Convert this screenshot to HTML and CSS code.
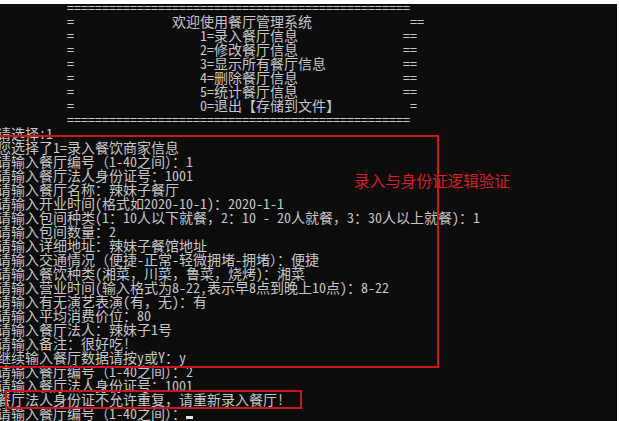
FILE: index.html
```html
<!DOCTYPE html>
<html lang="zh-CN">
<head>
<meta charset="utf-8">
<title>餐厅管理系统</title>
<link rel="stylesheet" href="styles.css">
</head>
<body>
<div class="term">
<pre class="lines">          =================================================
          =              欢迎使用餐厅管理系统              ==
          =                  1=录入餐厅信息               ==
          =                  2=修改餐厅信息               ==
          =                  3=显示所有餐厅信息           ==
          =                  4=删除餐厅信息               ==
          =                  5=统计餐厅信息               ==
          =                  0=退出【存储到文件】          =
          =================================================
请选择:1
您选择了1=录入餐饮商家信息
请输入餐厅编号（1-40之间）：1
请输入餐厅法人身份证号：1001
请输入餐厅名称：辣妹子餐厅
请输入开业时间(格式如2020-10-1)：2020-1-1
请输入包间种类(1：10人以下就餐，2：10 - 20人就餐，3：30人以上就餐)：1
请输入包间数量：2
请输入详细地址：辣妹子餐馆地址
请输入交通情况（便捷-正常-轻微拥堵-拥堵）：便捷
请输入餐饮种类(湘菜，川菜，鲁菜，烧烤)：湘菜
请输入营业时间(输入格式为8-22,表示早8点到晚上10点)：8-22
请输入有无演艺表演(有，无)：有
请输入平均消费价位：80
请输入餐厅法人：辣妹子1号
请输入备注：很好吃!
继续输入餐厅数据请按y或Y：y
请输入餐厅编号（1-40之间）：2
请输入餐厅法人身份证号：1001
餐厅法人身份证不允许重复，请重新录入餐厅!
请输入餐厅编号（1-40之间）：<span class="cursor"></span></pre>
<div class="mark mark-main"></div>
<div class="mark mark-dup"></div>
<div class="note">录入与身份证逻辑验证</div>
</div>
</body>
</html>
```
FILE: styles.css
```css
html, body {
  margin: 0;
  padding: 0;
  background: #ffffff;
}
body {
  width: 619px;
  height: 421px;
  overflow: hidden;
}
.term {
  position: relative;
  margin: 4px 2px 0 0;
  height: 417px;
  background: #0c0c0c;
  overflow: hidden;
}
.lines {
  margin: -4px 0 0 -3px;
  padding: 0;
  font-family: "Noto Sans Mono CJK SC", "Noto Sans CJK SC", "Liberation Mono", monospace;
  font-size: 14px;
  line-height: 14px;
  color: #c6c6c6;
  white-space: pre;
}
.cursor {
  display: inline-block;
  width: 7px;
  height: 13px;
  vertical-align: top;
  box-shadow: inset 0 -3px 0 #e4e4e4;
}
.mark {
  position: absolute;
  border: 2px solid #c9171f;
}
.mark-main {
  left: -10px;
  top: 131px;
  width: 445px;
  height: 229px;
}
.mark-dup {
  left: 5px;
  top: 386px;
  width: 293px;
  height: 15px;
}
.note {
  position: absolute;
  left: 354px;
  top: 167px;
  font-family: "Noto Sans CJK SC", sans-serif;
  font-size: 15.6px;
  line-height: 18px;
  color: #d3202a;
}
```
